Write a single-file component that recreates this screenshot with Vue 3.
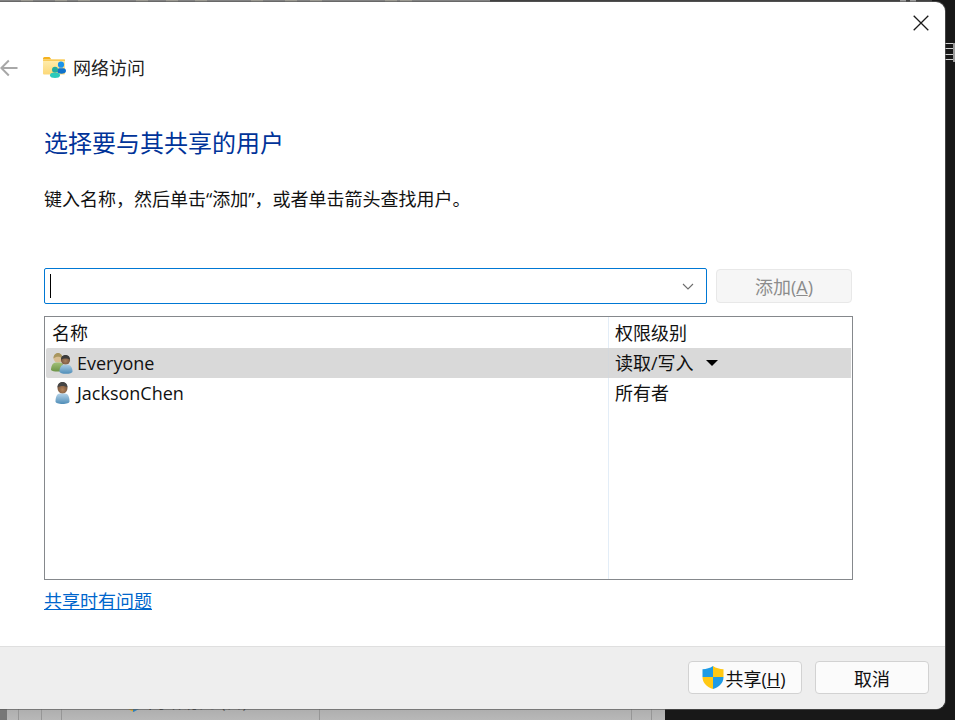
<script setup>
const users = [
  { name: 'Everyone', level: '读取/写入', selected: true, group: true },
  { name: 'JacksonChen', level: '所有者', selected: false, group: false }
]
const topMarks = [21, 55, 78, 136, 166, 195, 251, 285, 310, 385, 400]
</script>

<template>
  <div class="desktop">
    <div class="bg-top-left">
      <i v-for="m in topMarks" :key="m" class="top-mark" :style="{ left: m + 'px' }"></i>
    </div>
    <div class="bg-top-right">
      <i class="top-dot" style="left: 410px"></i>
      <i class="top-dot" style="left: 420px"></i>
    </div>
    <div class="bg-bottom">
      <i class="vline" style="left: 11px"></i>
      <i class="vline" style="left: 34px"></i>
      <i class="vline" style="left: 54px"></i>
      <i class="vline" style="left: 312px"></i>
      <i class="vline" style="left: 624px"></i>
      <i class="vline" style="left: 644px"></i>
      <i class="bottom-icon"></i>
      <span class="bottom-file">网络访问 (日)</span>
    </div>
    <div class="bg-right-lines">
      <i></i><i></i><i></i><i></i>
    </div>

    <section class="window">
      <button class="close" aria-label="关闭">
        <svg width="16" height="16" viewBox="0 0 16 16"><path d="M.7.7l14.6 14.600M15.300.7L.7 15.300" stroke="#1a1a1a" stroke-width="1.300" fill="none"/></svg>
      </button>

      <header class="head">
        <svg class="back" width="18" height="18" viewBox="0 0 18 18"><path d="M17.500 9H1M8.800 1.500L1.300 9l7.500 7.500" stroke="#a8a8a8" stroke-width="2" fill="none"/></svg>
        <svg class="folder" width="24" height="22" viewBox="0 0 24 22">
          <defs>
            <linearGradient id="fld" x1="0" y1="0" x2="0" y2="1">
              <stop offset="0" stop-color="#ffeeb0"/>
              <stop offset="1" stop-color="#fcd878"/>
            </linearGradient>
          </defs>
          <path d="M0 1.500A1.500 1.500 0 0 1 1.500 0h5l2 2.500H0z" fill="#f5b21e"/>
          <path d="M0 2.500h20.500a1.500 1.500 0 0 1 1.500 1.500v12.500a1 1 0 0 1-1 1H1a1 1 0 0 1-1-1z" fill="url(#fld)"/>
          <path d="M0 2.500h22v1.300H0z" fill="#f7bf3c"/>
          <circle cx="18" cy="7.700" r="3.100" fill="#1b93ea"/>
          <path d="M14 14c0-1.700 1-2.800 2.500-2.800h4c1.600 0 2.500 1.100 2.500 2.800 0 1.800-2.200 2.800-4.500 2.800S14 15.800 14 14z" fill="#0f72cc"/>
          <circle cx="12" cy="12.700" r="3" fill="#22ab9f"/>
          <path d="M7 18.500c0-1.700 1.200-2.700 2.700-2.700h4.600c1.500 0 2.700 1 2.700 2.700 0 1.700-2.300 2.500-5 2.500s-5-.8-5-2.500z" fill="#2ccabb"/>
        </svg>
        <span class="head-title">网络访问</span>
      </header>

      <div class="content">
        <h1 class="title">选择要与其共享的用户</h1>
        <p class="desc">键入名称&#xFF0C;然后单击“添加”&#xFF0C;或者单击箭头查找用户。</p>

        <div class="input-row">
          <div class="combo">
            <i class="caret"></i>
            <svg class="chevron" width="12" height="7" viewBox="0 0 12 7"><path d="M1 1l5 5 5-5" stroke="#6d6d6d" stroke-width="1.100" fill="none"/></svg>
          </div>
          <button class="add">添加(<u>A</u>)</button>
        </div>

        <div class="table">
          <div class="row head-row">
            <div class="cell name">名称</div>
            <div class="cell level">权限级别</div>
          </div>
          <div v-for="u in users" :key="u.name" class="row" :class="{ selected: u.selected }">
            <div class="cell name">
              <svg v-if="u.group" class="uicon" width="25" height="22" viewBox="0 0 25 22">
                <defs>
                  <linearGradient id="gb" x1="0" y1="0" x2="0" y2="1">
                    <stop offset="0" stop-color="#a9cce3"/>
                    <stop offset="1" stop-color="#4f8db8"/>
                  </linearGradient>
                  <linearGradient id="gg" x1="0" y1="0" x2="0" y2="1">
                    <stop offset="0" stop-color="#a3c078"/>
                    <stop offset="1" stop-color="#6c9447"/>
                  </linearGradient>
                  <radialGradient id="gf" cx=".5" cy=".6" r=".6">
                    <stop offset="0" stop-color="#a87f5c"/>
                    <stop offset="1" stop-color="#6a4d38"/>
                  </radialGradient>
                </defs>
                <circle cx="8" cy="6" r="4.500" fill="#d8bd92"/>
                <path d="M3.500 6.500C3.500 2.500 6 1 8 1s4.500 1.500 4.500 5.500C10 4.200 6 4.200 3.500 6.500z" fill="#a8965f"/>
                <path d="M1 18c0-4.500 2-7.500 5-7.500h4c3 0 4 3 4 7.500-2 2-11 2-13 0z" fill="url(#gg)"/>
                <circle cx="15.500" cy="8" r="4.600" fill="url(#gf)"/>
                <path d="M11 7.800C11 4 13.500 3 15.500 3S20 4 20 7.800C18 6 13 6 11 7.800z" fill="#3b3b3b"/>
                <path d="M9.500 19.500c0-4 1.800-6.800 4.500-6.800h3.500c3 0 5 2.800 5 6.800 0 1.400-3 2.300-6.500 2.300s-6.500-.9-6.500-2.300z" fill="url(#gb)"/>
              </svg>
              <svg v-else class="uicon" width="25" height="24" viewBox="0 0 25 24">
                <defs>
                  <linearGradient id="sb" x1="0" y1="0" x2="0" y2="1">
                    <stop offset="0" stop-color="#b5d3e8"/>
                    <stop offset="1" stop-color="#4f8db8"/>
                  </linearGradient>
                  <radialGradient id="sf" cx=".5" cy=".65" r=".6">
                    <stop offset="0" stop-color="#b5855c"/>
                    <stop offset="1" stop-color="#6f4f38"/>
                  </radialGradient>
                </defs>
                <ellipse cx="13.500" cy="7" rx="5" ry="5.800" fill="url(#sf)"/>
                <path d="M8.500 6.500C8.500 2.500 11 1 13.500 1s5 1.500 5 5.500c-2-2-8-2-10 0z" fill="#454545"/>
                <path d="M6.500 20.500c0-4.500 1.500-8 4.500-8h5c3 0 4.500 3.500 4.500 8 0 1.500-3 2.500-7 2.500s-7-1-7-2.500z" fill="url(#sb)"/>
              </svg>
              <span>{{ u.name }}</span>
            </div>
            <div class="cell level">
              <span>{{ u.level }}</span>
              <i v-if="u.selected" class="tri"></i>
            </div>
          </div>
          <div class="row filler">
            <div class="cell name"></div>
            <div class="cell level"></div>
          </div>
        </div>

        <a class="link">共享时有问题</a>
      </div>

      <footer class="foot">
        <button class="btn share">
          <svg width="22" height="23" viewBox="0 0 22 23">
            <path d="M11 0C8 2.200 4.500 3 .5 3.200V11h10.500z" fill="#1d9be6"/>
            <path d="M11 0c3 2.200 6.500 3 10.500 3.200V11H11z" fill="#ffc814"/>
            <path d="M.5 11c0 6 4.500 10 10.500 12V11z" fill="#ffc814"/>
            <path d="M21.500 11c0 6-4.500 10-10.500 12V11z" fill="#1d9be6"/>
          </svg>
          <span>共享(<u>H</u>)</span>
        </button>
        <button class="btn">取消</button>
      </footer>
    </section>
  </div>
</template>

<style>
html, body { margin: 0; padding: 0; background: #161616; }
</style>

<style scoped>
.desktop {
  position: relative;
  width: 955px;
  height: 720px;
  overflow: hidden;
  background: #181818;
  font-family: "Open Sans", "Noto Sans CJK SC", sans-serif;
  font-size: 18px;
  color: #111;
}
.bg-top-left { position: absolute; left: 0; top: 0; width: 490px; height: 3px; background: #828282; }
.top-mark { position: absolute; top: 0; width: 12px; height: 2px; background: #9c9a92; }
.bg-top-right { position: absolute; left: 490px; top: 0; width: 442px; height: 3px; background: #414141; }
.top-dot { position: absolute; top: 0; width: 6px; height: 2px; background: #9a9a9a; }
.bg-bottom {
  position: absolute; left: 0; top: 709px; width: 665px; height: 11px;
  background: linear-gradient(#aeaeae, #b8b8b8);
  border-left: 7px solid #777;
  box-sizing: border-box;
  overflow: hidden;
}
.vline { position: absolute; top: 0; width: 1px; height: 11px; background: #969696; }
.bottom-icon {
  position: absolute; left: 121px; top: 0; width: 11px; height: 3px;
  background: linear-gradient(90deg, #d9a52e 50%, #2f7fb8 50%);
  clip-path: polygon(0 0, 100% 0, 50% 100%);
}
.bottom-file {
  position: absolute; left: 141px; top: -19px; font-size: 17px; line-height: 24px; color: #222;
}
.bg-right-lines {
  position: absolute; left: 945px; top: 43px; width: 8px; height: 19px;
  border-right: 2px solid #9a9a9a; display: flex; flex-direction: column; gap: 4.400px;
}
.bg-right-lines i { display: block; height: 1px; background: #cfcfcf; }

.window {
  position: absolute;
  left: 0;
  top: 2px;
  width: 945px;
  height: 707px;
  display: flex;
  flex-direction: column;
  background: #fff;
  border-radius: 0 9px 9px 0;
  box-shadow: 0 0 0 1px rgba(90, 90, 90, .65);
  overflow: hidden;
}
.close {
  position: absolute; right: 16px; top: 13px;
  width: 16px; height: 16px; padding: 0; border: 0; background: none; display: block;
}
.close svg { display: block; }

.head { height: 32px; margin-top: 50px; display: flex; align-items: center; }
.back { flex: none; }
.folder { margin-left: 25px; flex: none; }
.head-title { margin-left: 6px; line-height: 32px; color: #222; }

.content { padding-left: 44px; display: flex; flex-direction: column; align-items: flex-start; flex: 1; }
.title { margin: 43px 0 0; font-size: 24px; line-height: 32px; font-weight: 400; color: #003399; }
.desc { margin: 27px 0 0; line-height: 26px; color: #111; }

.input-row { margin-top: 56px; display: flex; align-items: center; }
.combo {
  position: relative; box-sizing: border-box; width: 663px; height: 36px;
  border: 1px solid #0078d4; border-radius: 2px; background: #fff;
  display: flex; align-items: center; justify-content: space-between;
  padding: 0 12px 0 5px;
}
.caret { display: block; width: 1px; height: 24px; background: #000; }
.chevron { display: block; }
.add {
  margin-left: 9px; box-sizing: border-box; width: 136px; height: 34px;
  background: #f6f6f6; border: 1px solid #e8e8e8; border-radius: 4px;
  font: inherit; color: #8c8c8c; padding: 0;
}

.table {
  margin-top: 12px; box-sizing: border-box; width: 809px; height: 264px;
  border: 1px solid #85888c; display: flex; flex-direction: column; background: #fff;
}
.row { display: grid; grid-template-columns: 563px 1fr; margin: 0 1px 0 0; height: 30px; flex: none; }
.head-row { height: 31px; box-sizing: border-box; }
.head-row .cell { padding-top: 1px; }
.selected { background: #d9d9d9; margin-left: 1px; grid-template-columns: 562px 1fr; border-radius: 2px 0 0 2px; }
.filler { flex: 1; }
.cell { display: flex; align-items: center; line-height: 30px; white-space: nowrap; }
.cell.name { padding-left: 7px; }
.selected .cell.name { padding-left: 4px; }
.cell.level { border-left: 1px solid #e3edf7; padding-left: 6px; }
.selected .cell.level { border-left-color: #d4d8dc; }
.uicon { flex: none; margin-right: 2px; }
.row:not(.selected) .uicon { margin-left: -3px; margin-right: 3px; }
.tri {
  display: block; margin-left: 12px; width: 0; height: 0;
  border-left: 6px solid transparent; border-right: 6px solid transparent; border-top: 6px solid #000;
}

.link { margin-top: 8px; line-height: 26px; color: #0066cc; text-decoration: underline; }

.foot {
  box-sizing: border-box; height: 63px; flex: none;
  background: #eeeeee; border-top: 1px solid #dfdfdf;
  display: flex; justify-content: flex-end; gap: 13px;
  padding: 14px 16px 0 0;
}
.btn {
  box-sizing: border-box; width: 114px; height: 33px; padding: 0;
  background: #fbfbfb; border: 1px solid #d2d2d2; border-radius: 4px;
  font: inherit; color: #111;
  display: flex; align-items: center; justify-content: center; gap: 2px;
}
.share { padding-right: 3px; }
</style>
